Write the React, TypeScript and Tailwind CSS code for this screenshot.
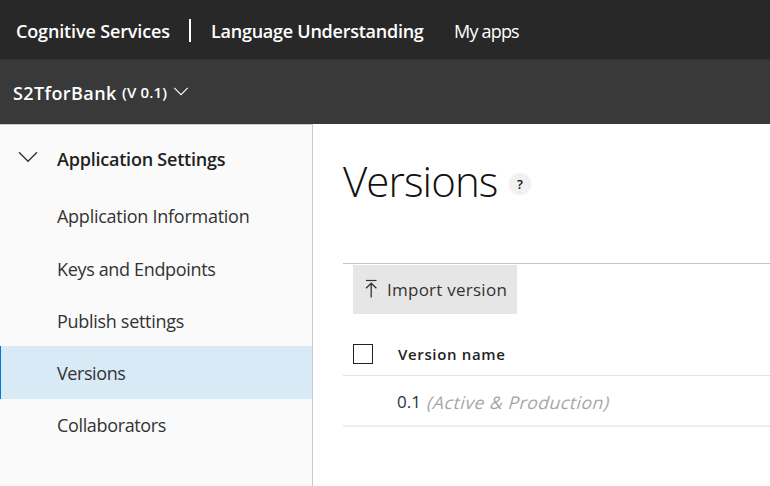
type IconProps = { className?: string };

function Chevron({ className = "" }: IconProps) {
  return (
    <svg viewBox="0 0 20 12" fill="none" stroke="currentColor" className={className}>
      <path d="M1 1.2 10 10.2 19 1.2" strokeWidth="1.4" />
    </svg>
  );
}

function ImportIcon({ className = "" }: IconProps) {
  return (
    <svg viewBox="0 0 12 19" fill="none" stroke="currentColor" className={className}>
      <path d="M1 1.5h10.5" strokeWidth="1.2" />
      <path d="M6.2 4.3V18.5M1 9.3l5.2-5.1 5.2 5.1" strokeWidth="1.3" />
    </svg>
  );
}

const links = [
  { label: "Application Information", box: "h-[52px] pl-[57px] tracking-[-0.26px]" },
  { label: "Keys and Endpoints", box: "h-[53px] pl-[57px] tracking-[-0.34px]" },
  { label: "Publish settings", box: "h-[51px] pl-[57px] tracking-[-0.3px]" },
  {
    label: "Versions",
    box: "h-[53px] border-l border-[#0078d7] bg-[#d7eaf5] pl-[56px] tracking-[-0.42px]",
  },
  { label: "Collaborators", box: "h-[52px] pl-[57px] tracking-[-0.35px]" },
];

export default function App() {
  return (
    <div className="flex h-[486px] w-[770px] flex-col overflow-hidden bg-white font-['Open_Sans','Noto_Sans',sans-serif] text-[18px] leading-6 whitespace-nowrap text-[#333]">
      <header className="flex h-[60px] shrink-0 items-center border-b border-[#303030] bg-[#282828] pt-[3px] pl-4 text-white">
        <span className="w-[173px] font-semibold tracking-[-0.14px]">Cognitive Services</span>
        <span className="mb-[2px] h-[23px] w-[2px] bg-white" />
        <span className="ml-5 w-[243px] font-semibold tracking-[-0.25px]">
          Language Understanding
        </span>
        <span className="tracking-[-0.8px]">My apps</span>
      </header>
      <div className="flex h-16 shrink-0 items-center bg-[#393939] pt-[2px] pl-[13px] text-white">
        <span className="w-[109px] font-semibold tracking-[0.4px]">S2TforBank</span>
        <span className="mb-[2px] text-[15px] font-semibold tracking-[0.15px]">(V 0.1)</span>
        <Chevron className="mb-[3px] ml-[6px] h-[9px] w-[16px]" />
      </div>
      <div className="flex min-h-0 flex-1">
        <aside className="flex w-[313px] shrink-0 flex-col border-t border-r border-[#c8c8c8] bg-[#fafafa]">
          <div className="flex h-[65px] items-center pt-[2px] pl-[18px]">
            <Chevron className="mb-1 h-[12px] w-[20px]" />
            <span className="ml-[19px] font-semibold tracking-[-0.22px] text-[#222]">
              Application Settings
            </span>
          </div>
          <nav className="flex flex-col text-[#333]">
            {links.map(({ label, box }) => (
              <a key={label} className={`flex items-center ${box}`}>
                {label}
              </a>
            ))}
          </nav>
        </aside>
        <main className="flex flex-1 flex-col pl-[30px]">
          <div className="flex h-[139px] items-start pt-[29px]">
            <h1 className="w-[166px] text-[42px] leading-[56px] font-light tracking-[-0.9px] text-[#111]">
              Versions
            </h1>
            <span className="mt-[20px] flex size-[22px] items-center justify-center rounded-full bg-[#f1f1f1] text-[13px] font-semibold text-[#111]">
              ?
            </span>
          </div>
          <div className="h-[51px] border-t border-[#c4c4c4] pt-px pl-[10px]">
            <button className="flex h-[49px] w-[164px] items-center bg-[#e6e6e6] pl-3 text-[17px] tracking-[0.25px] text-[#333]">
              <ImportIcon className="mr-[10px] mb-[2px] h-[19px] w-[12px]" />
              Import version
            </button>
          </div>
          <div className="flex h-[62px] items-center border-b border-[#e2e2e2] pt-[19px] pl-[10px]">
            <span className="size-5 border border-[#222]" />
            <span className="ml-[25px] text-[15px] font-semibold tracking-[0.65px] text-[#222]">
              Version name
            </span>
          </div>
          <div className="flex h-[51px] items-center border-b-2 border-[#eee] pt-[3px] pl-[54px] text-[17px]">
            <span className="w-[31px]">0.1</span>
            <span className="inline-block -skew-x-[16deg] text-[17.5px] tracking-[0.55px] text-[#a6a6a6]">
              (Active &amp; Production)
            </span>
          </div>
        </main>
      </div>
    </div>
  );
}
